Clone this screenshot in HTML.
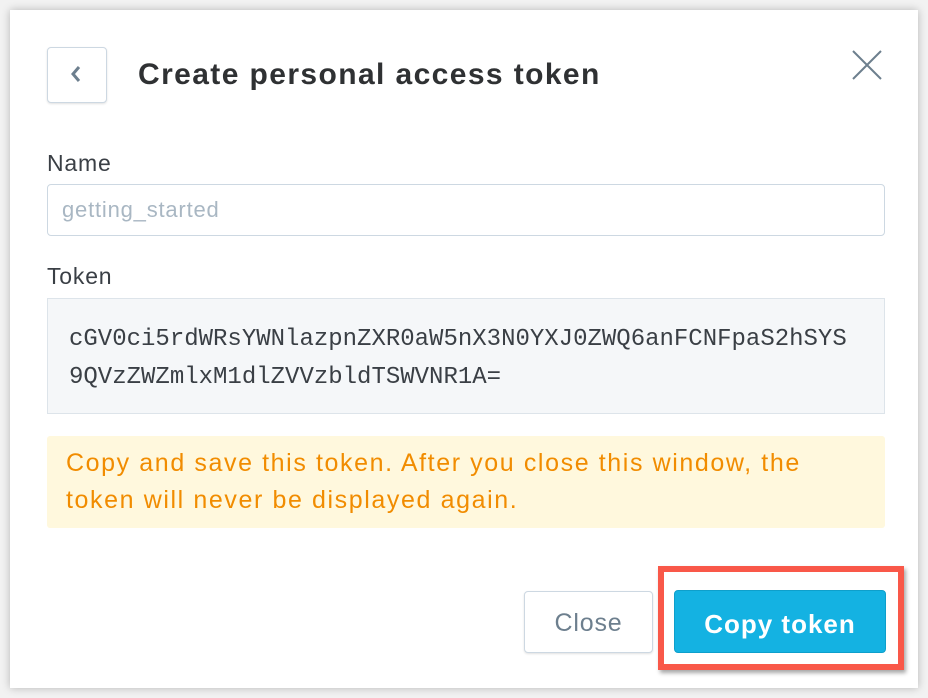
<!DOCTYPE html>
<html><head><style>
body{margin:0;width:928px;height:698px;background:#f2f2f2;position:relative;overflow:hidden;font-family:"Liberation Sans",sans-serif}
.dlg{position:absolute;left:10px;top:10px;width:908px;height:678px;background:#fff;box-shadow:0 0 8px rgba(0,0,0,.25)}
.abs{position:absolute}
</style></head><body>
<div class="dlg"></div>
<div class="abs" style="left:47px;top:47px;width:58px;height:54px;border:1px solid #cdd8e2;border-radius:4px;box-shadow:0 1px 2px rgba(0,0,0,.12);background:#fff"></div>
<svg class="abs" style="left:68px;top:64px" width="16" height="20"><path d="M11 3L5 10L11 17" stroke="#6d7f8e" stroke-width="3" fill="none"/></svg>
<div class="abs" style="left:138px;top:58px;font-size:30px;font-weight:bold;color:#2f3133;letter-spacing:1.4px">Create personal access token</div>
<svg class="abs" style="left:850px;top:48px" width="34" height="34"><path d="M3 3L31 31M31 3L3 31" stroke="#6d7f8e" stroke-width="2"/></svg>
<div class="abs" style="left:47px;top:150px;font-size:23px;color:#3a3f45;letter-spacing:0.8px">Name</div>
<div class="abs" style="left:47px;top:184px;width:836px;height:50px;border:1px solid #cdd8e2;border-radius:4px"></div>
<div class="abs" style="left:62px;top:197px;font-size:22px;color:#a9b7c3;letter-spacing:0.8px">getting_started</div>
<div class="abs" style="left:47px;top:263px;font-size:23px;color:#3a3f45;letter-spacing:0.8px">Token</div>
<div class="abs" style="left:47px;top:298px;width:836px;height:114px;border:1px solid #dde4ea;background:#f5f7f9"></div>
<div class="abs" style="left:69px;top:321px;font-family:'Liberation Mono',monospace;font-size:24px;line-height:38px;color:#3a3f45">cGV0ci5rdWRsYWNlazpnZXR0aW5nX3N0YXJ0ZWQ6anFCNFpaS2hSYS<br>9QVzZWZmlxM1dlZVVzbldTSWVNR1A=</div>
<div class="abs" style="left:47px;top:436px;width:838px;height:92px;background:#fff8dd;border-radius:3px"></div>
<div class="abs" style="left:66px;top:445px;font-size:25px;line-height:37px;color:#f18c00;letter-spacing:1.6px;white-space:nowrap">Copy and save this token. After you close this window, the<br>token will never be displayed again.</div>
<div class="abs" style="left:524px;top:591px;width:127px;height:60px;border:1px solid #cdd8e2;border-radius:4px;box-shadow:0 1px 2px rgba(0,0,0,.12);background:#fff;text-align:center;line-height:62px;font-size:25px;color:#6d7f8e;letter-spacing:0.8px">Close</div>
<div class="abs" style="left:658px;top:566px;width:234px;height:92px;border:6px solid #f95849;box-shadow:2px 3px 4px rgba(0,0,0,.35)"></div>
<div class="abs" style="left:674px;top:590px;width:212px;height:63px;background:#14b2e2;border:1px solid #0e9fcb;border-radius:4px;box-sizing:border-box;text-align:center;line-height:66px;font-size:26px;font-weight:bold;color:#fff;letter-spacing:1px">Copy token</div>
</body></html>
